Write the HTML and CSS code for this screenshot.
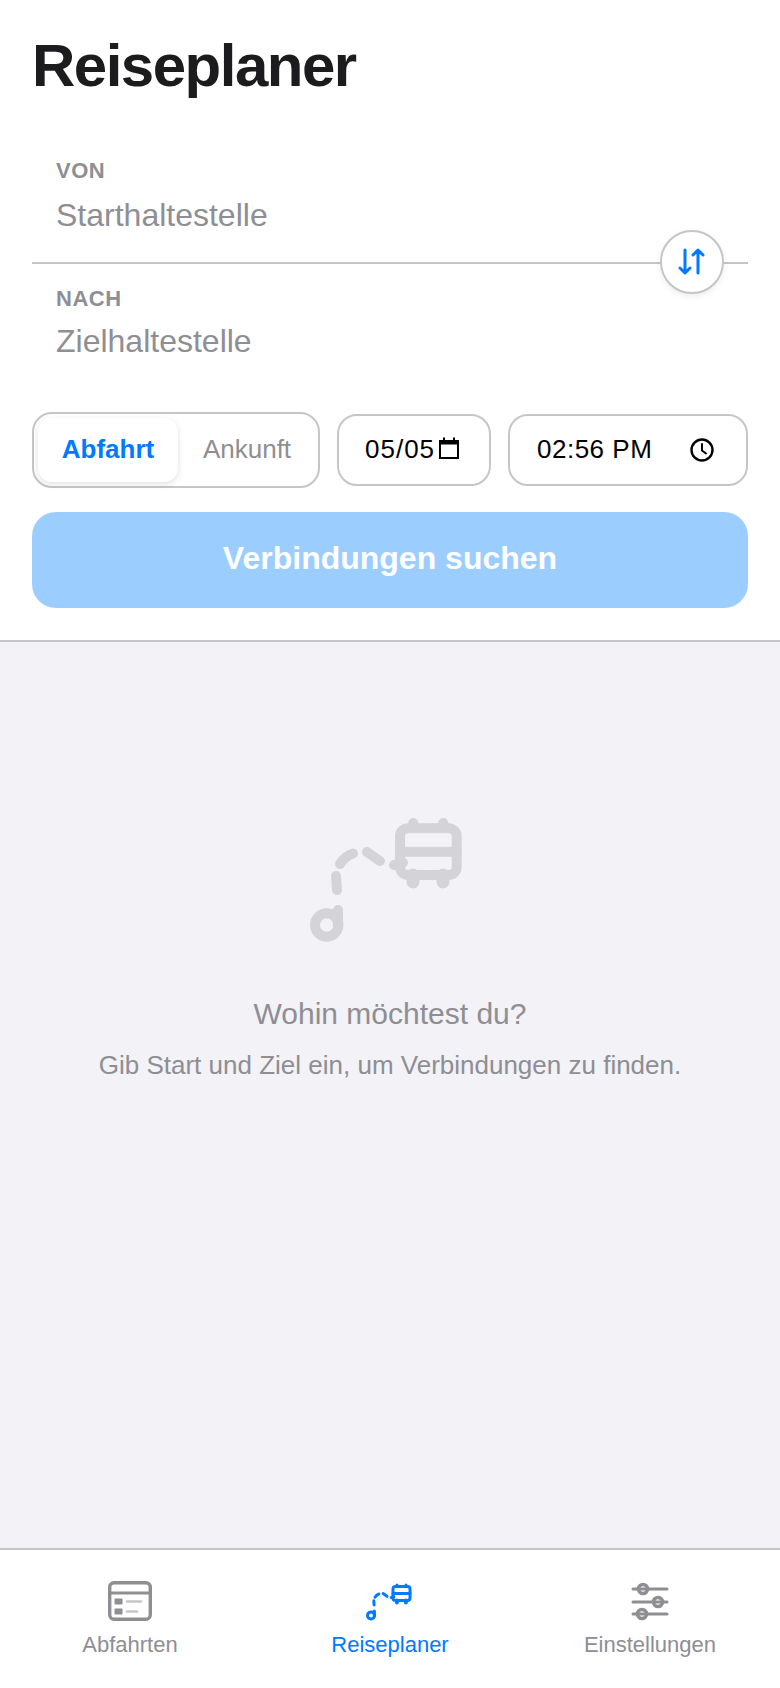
FILE: index.html
```html
<!DOCTYPE html>
<html lang="de">
<head>
  <meta charset="UTF-8" />
  <meta name="viewport" content="width=device-width, initial-scale=1.0"/>
  <title>Reiseplaner</title>
  <link rel="stylesheet" href="styles.css">
</head>
<body>
  <svg class="defs" width="0" height="0">
    <symbol id="routeIcon" viewBox="0 0 200 170">
      <g fill="none" stroke="currentColor" stroke-width="10" stroke-linecap="round" stroke-linejoin="round">
        <circle cx="36.7" cy="135" r="11.7"/>
        <path d="M48 120V135"/>
        <path d="M46 86L47 100"/>
        <path d="M50 74Q55 66 63 63.5"/>
        <path d="M77 62L90 71"/>
        <path d="M104 75L113 72.500"/>
        <rect x="110" y="38.300" width="56.700" height="46.700" rx="8"/>
        <path d="M110 61.700H166.700"/>
        <path d="M123.300 33V38M153.300 33V38"/>
        <path d="M123 85V92M153 85V92" stroke-width="13"/>
      </g>
    </symbol>
  </svg>

  <section class="planner">
    <h1>Reiseplaner</h1>

    <div class="route">
      <div class="field field-from">
        <label>VON</label>
        <div class="placeholder">Starthaltestelle</div>
      </div>
      <div class="field field-to">
        <label>NACH</label>
        <div class="placeholder">Zielhaltestelle</div>
      </div>
      <button class="swap-btn" aria-label="Tauschen">
        <svg width="32" height="32" viewBox="0 0 32 32" fill="none" stroke="#007aff" stroke-width="3" stroke-linecap="round" stroke-linejoin="round">
          <path d="M9 4V27M4 22L9 27L14 22"/>
          <path d="M22 27V4M17 9L22 4L27 9"/>
        </svg>
      </button>
    </div>

    <div class="controls">
      <div class="segment">
        <div class="segment-item active">Abfahrt</div>
        <div class="segment-item">Ankunft</div>
      </div>
      <div class="picker picker-date">
        <span>05/05</span>
        <svg width="24" height="26" viewBox="0 2 24 26" fill="none" stroke="#000">
          <path d="M3 8.500H21V23H3Z" stroke-width="2"/>
          <path d="M2 5H22V9H2Z" fill="#000" stroke="none"/>
          <path d="M7 2.500V6M17 2.500V6" stroke-width="2"/>
        </svg>
      </div>
      <div class="picker picker-time">
        <span>02:56 PM</span>
        <svg width="26" height="26" viewBox="0 0 26 26" fill="none" stroke="#000" stroke-width="2.400" stroke-linecap="round">
          <circle cx="13" cy="13" r="10.500"/>
          <path d="M13 7V13.500L17 16.500" stroke-width="2"/>
        </svg>
      </div>
    </div>

    <button class="search-btn">Verbindungen suchen</button>
  </section>

  <main class="empty">
    <svg class="empty-icon" width="200" height="170"><use href="#routeIcon"/></svg>
    <h2>Wohin möchtest du?</h2>
    <p>Gib Start und Ziel ein, um Verbindungen zu finden.</p>
  </main>

  <nav class="tabbar">
    <div class="tab">
      <svg class="tab-icon" width="60" height="51" viewBox="0 0 60 51" fill="none" stroke="currentColor">
        <rect x="9.700" y="7.700" width="40.600" height="36.600" rx="4.500" stroke-width="3.400"/>
        <path d="M9.700 18H50.300" stroke-width="3"/>
        <rect x="14.500" y="23.500" width="8" height="6" rx="1" fill="currentColor" stroke="none"/>
        <rect x="14.500" y="33.500" width="8" height="6" rx="1" fill="currentColor" stroke="none"/>
        <path d="M27 26.500H41M27 36.500H37" stroke="#c6c6c8" stroke-width="2.600" stroke-linecap="round"/>
      </svg>
      <span>Abfahrten</span>
    </div>
    <div class="tab active">
      <svg class="tab-icon" width="60" height="51"><use href="#routeIcon"/></svg>
      <span>Reiseplaner</span>
    </div>
    <div class="tab">
      <svg class="tab-icon" width="60" height="51" viewBox="0 0 60 51" fill="none" stroke="currentColor" stroke-width="3" stroke-linecap="round">
        <path d="M13 14H47M13 27H47M13 39H47"/>
        <circle cx="23" cy="14" r="4.500" stroke-width="3.600"/>
        <circle cx="38" cy="27" r="4.500" stroke-width="3.600"/>
        <circle cx="22" cy="39" r="4.500" stroke-width="3.600"/>
      </svg>
      <span>Einstellungen</span>
    </div>
  </nav>
</body>
</html>
```

FILE: styles.css
```css
* {
  box-sizing: border-box;
}

body {
  font-family: 'Liberation Sans', Arial, sans-serif;
  margin: 0;
  height: 100vh;
  display: flex;
  flex-direction: column;
  background-color: #fff;
  overflow: hidden;
}

.defs {
  position: absolute;
}

.planner {
  padding: 33px 32px 32px;
  border-bottom: 2px solid #c6c6c8;
  background: #fff;
}

h1 {
  font-size: 60px;
  line-height: 66px;
  font-weight: 700;
  letter-spacing: -1.500px;
  margin: 0;
  color: #1c1c1e;
}

.route {
  position: relative;
  margin-top: 33px;
  padding-bottom: 51px;
}

.field {
  padding: 0 24px;
}

.field-from {
  padding-top: 26px;
  padding-bottom: 27px;
  border-bottom: 2px solid #c6c6c8;
}

.field-to {
  padding-top: 22px;
}

.field label {
  display: block;
  font-size: 22px;
  line-height: 26px;
  font-weight: 700;
  letter-spacing: 0.500px;
  color: #8e8e93;
}

.placeholder {
  font-size: 32px;
  line-height: 40px;
  color: #8e8e93;
}

.field-from .placeholder {
  margin-top: 11px;
}

.field-to .placeholder {
  margin-top: 9px;
}

.swap-btn {
  position: absolute;
  top: 98px;
  right: 24px;
  width: 64px;
  height: 64px;
  padding: 0;
  border: 2px solid #c6c6c8;
  border-radius: 50%;
  background: #fff;
  box-shadow: 0 2px 6px rgba(0, 0, 0, 0.08);
  display: flex;
  align-items: center;
  justify-content: center;
}

.controls {
  display: flex;
  align-items: center;
  gap: 17px;
}

.segment {
  width: 288px;
  height: 76px;
  display: flex;
  padding: 4px;
  border: 2px solid #c6c6c8;
  border-radius: 20px;
  background: #fff;
}

.segment-item {
  display: flex;
  align-items: center;
  justify-content: center;
  width: 138px;
  flex: none;
  padding-bottom: 2px;
  font-size: 26px;
  color: #8e8e93;
  border-radius: 14px;
}

.segment-item.active {
  width: 140px;
  font-weight: 700;
  color: #007aff;
  background: #fff;
  box-shadow: 0 2px 6px rgba(0, 0, 0, 0.12);
}

.picker {
  height: 72px;
  display: flex;
  align-items: center;
  border: 2px solid #c6c6c8;
  border-radius: 20px;
  font-size: 26px;
  color: #000;
}

.picker span {
  padding-bottom: 2px;
}

.picker-date {
  width: 154px;
  padding-left: 26px;
  gap: 2px;
}

.picker-date span {
  letter-spacing: 1px;
}

.picker-time {
  width: 240px;
  padding-left: 27px;
}

.picker-time span {
  letter-spacing: 0.500px;
}

.picker-time svg {
  margin-left: auto;
  margin-right: 31px;
}

.search-btn {
  display: block;
  width: 100%;
  height: 96px;
  margin-top: 24px;
  padding: 0 0 4px;
  border: none;
  border-radius: 24px;
  background-color: #9ccdff;
  color: #fff;
  font-family: inherit;
  font-size: 32px;
  font-weight: 700;
}

.empty {
  flex: 1;
  background-color: #f2f2f7;
  display: flex;
  flex-direction: column;
  align-items: center;
  padding-top: 148px;
  text-align: center;
}

.empty-icon {
  color: #d4d4d8;
  display: block;
}

.empty h2 {
  font-size: 30px;
  line-height: 36px;
  font-weight: 400;
  color: #8e8e93;
  margin: 36px 0 0;
}

.empty p {
  font-size: 26px;
  line-height: 34px;
  color: #8e8e93;
  margin: 16px 0 0;
}

.tabbar {
  height: 140px;
  display: flex;
  border-top: 2px solid #c6c6c8;
  background: #fff;
  padding-top: 25px;
}

.tab {
  flex: 1;
  display: flex;
  flex-direction: column;
  align-items: center;
  font-size: 22px;
  line-height: 26px;
  color: #8e8e93;
}

.tab.active {
  color: #007aff;
}

.tab-icon {
  display: block;
  margin-bottom: 6px;
}
```
